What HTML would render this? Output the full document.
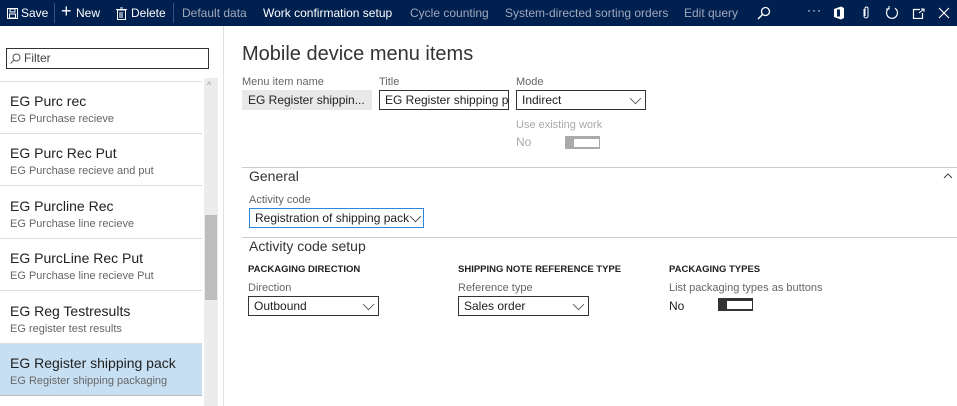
<!DOCTYPE html>
<html><head><style>
*{margin:0;padding:0;box-sizing:border-box}
body{width:957px;height:406px;overflow:hidden;background:#fff;font-family:"Segoe UI","Liberation Sans",sans-serif;color:#212121;position:relative}
.a{position:absolute;white-space:nowrap}
.bar{position:absolute;left:0;top:0;width:957px;height:26px;background:#002050;color:#fff;font-size:12px}
.bar .a{top:6px}
.dim{color:#a0a8bc}
.lbl{font-size:11px;color:#666}
.fld{position:absolute;height:20px;border:1px solid #333;font-size:12px;padding:2px 5px;white-space:nowrap;overflow:hidden}
.chev{position:absolute;right:5px;top:3px;width:9px;height:9px;border-right:1px solid #555;border-bottom:1px solid #555;transform:rotate(45deg) scale(.9)}
.it{position:absolute;left:0;width:202px;height:52px;border-bottom:1px solid #ddd}
.it .t{position:absolute;left:10px;top:11px;font-size:14px}
.it .s{position:absolute;left:10px;top:31px;font-size:11px;color:#666}
.hd{font-size:9.5px;font-weight:bold}
.tog{position:absolute;width:35px;height:13px;background:#333}
.tog::after{content:"";position:absolute;left:9px;top:3px;width:23px;height:6px;background:#fff;border:1px solid #fff}
</style></head><body>
<div class="bar">
<svg class="a" style="left:7px;top:8px" width="11" height="11" viewBox="0 0 11 11"><rect x=".5" y=".5" width="10" height="10" fill="none" stroke="#fff"/><rect x="3" y="1" width="5" height="3" fill="none" stroke="#fff"/><rect x="2.5" y="6" width="6" height="4" fill="none" stroke="#fff"/></svg>
<span class="a" style="left:21px">Save</span>
<div class="a" style="left:54px;top:3px;width:1px;height:20px;background:#3a5080"></div>
<span class="a" style="left:61px;top:1px;font-size:18px;font-weight:200">+</span>
<span class="a" style="left:76px">New</span>
<svg class="a" style="left:116px;top:7px" width="11" height="13" viewBox="0 0 11 13"><rect x="1.5" y="3" width="8" height="9.5" fill="none" stroke="#fff"/><path d="M0 2.5h11M4 1h3M4 5v6M6 5v6" stroke="#fff"/></svg>
<span class="a" style="left:131px">Delete</span>
<div class="a" style="left:173px;top:3px;width:1px;height:20px;background:#3a5080"></div>
<span class="a dim" style="left:182px">Default data</span>
<span class="a" style="left:263px">Work confirmation setup</span>
<span class="a dim" style="left:410px">Cycle counting</span>
<span class="a dim" style="left:505px">System-directed sorting orders</span>
<span class="a dim" style="left:684px">Edit query</span>
<svg class="a" style="left:757px;top:6px" width="14" height="14" viewBox="0 0 14 14"><circle cx="8.5" cy="5.5" r="4" fill="none" stroke="#fff" stroke-width="1.3"/><path d="M5.5 8.5L1 13" stroke="#fff" stroke-width="1.4"/></svg>
<span class="a" style="left:807px;top:3px;letter-spacing:1px">···</span>
<svg class="a" style="left:833px;top:6px" width="12" height="14" viewBox="0 0 12 14"><path d="M1 3L8 0.5 11 2v10l-3 1.5L1 11V3z" fill="#fff"/><rect x="4" y="3.5" width="3" height="7" fill="#002050"/></svg>
<svg class="a" style="left:863px;top:6px" width="6" height="14" viewBox="0 0 6 14"><path d="M1 3v7a2 2 0 004 0V2.5a1.5 1.5 0 00-3 0V10" fill="none" stroke="#fff"/></svg>
<svg class="a" style="left:885px;top:6px" width="14" height="14" viewBox="0 0 14 14"><path d="M4 2.2A5.5 5.5 0 1010 2.2" fill="none" stroke="#fff" stroke-width="1.2"/><path d="M4 0v3H1" fill="none" stroke="#fff"/></svg>
<svg class="a" style="left:912px;top:8px" width="13" height="11" viewBox="0 0 13 11"><path d="M8 1.5H1.5v9h9V5" fill="none" stroke="#fff" stroke-width="1.2"/><path d="M7 5l5-4M9 1h3v3" fill="none" stroke="#fff"/></svg>
<svg class="a" style="left:938px;top:7px" width="12" height="12" viewBox="0 0 12 12"><path d="M1 1l10 10M11 1L1 11" stroke="#fff" stroke-width="1.2"/></svg>
</div>
<div class="a" style="left:223px;top:26px;width:1px;height:380px;background:#e0e0e0"></div>
<div class="a" style="left:6px;top:48px;width:203px;height:21px;border:1px solid #333"></div>
<svg class="a" style="left:10px;top:53px" width="11" height="11" viewBox="0 0 11 11"><circle cx="6.5" cy="4.5" r="3.5" fill="none" stroke="#555"/><path d="M4 7L.5 10.5" stroke="#555"/></svg>
<span class="a" style="left:24px;top:51px;font-size:12px;color:#444">Filter</span>
<div class="a" style="left:0;top:81px;width:202px;height:1px;background:#ddd"></div>
<div class="a" style="left:204px;top:78px;width:14px;height:328px;background:#ececec"></div>
<div class="a" style="left:205px;top:215px;width:12px;height:85px;background:#bdbdbd"></div>
<span class="a" style="left:207px;top:80px;font-size:9px;color:#999">^</span>
<div class="it" style="top:82px"><span class="t">EG Purc rec</span><span class="s">EG Purchase recieve</span></div>
<div class="it" style="top:134px"><span class="t">EG Purc Rec Put</span><span class="s">EG Purchase recieve and put</span></div>
<div class="it" style="top:187px"><span class="t">EG Purcline Rec</span><span class="s">EG Purchase line recieve</span></div>
<div class="it" style="top:239px"><span class="t">EG PurcLine Rec Put</span><span class="s">EG Purchase line recieve Put</span></div>
<div class="it" style="top:292px"><span class="t">EG Reg Testresults</span><span class="s">EG register test results</span></div>
<div class="it" style="top:344px;background:#c7dff3;border-bottom-color:#bbb"><span class="t">EG Register shipping pack</span><span class="s">EG Register shipping packaging</span></div>

<span class="a" style="left:242px;top:43px;font-size:20px;font-weight:300;color:#333">Mobile device menu items</span>
<span class="a lbl" style="left:242px;top:76px">Menu item name</span>
<span class="a lbl" style="left:379px;top:76px">Title</span>
<span class="a lbl" style="left:516px;top:76px">Mode</span>
<div class="fld" style="left:242px;top:90px;width:130px;border-color:#e8e8e8;background:#e8e8e8">EG Register shippin...</div>
<div class="fld" style="left:379px;top:90px;width:130px">EG Register shipping p</div>
<div class="fld" style="left:516px;top:90px;width:130px">Indirect<span class="chev"></span></div>
<span class="a lbl" style="left:516px;top:119px;color:#aaa">Use existing work</span>
<span class="a" style="left:516px;top:135px;font-size:12px;color:#aaa">No</span>
<div class="tog" style="left:565px;top:136px;background:#aaa"></div>
<div class="a" style="left:242px;top:167px;width:715px;height:1px;background:#ccc"></div>
<span class="a" style="left:249px;top:168px;font-size:14px;color:#333">General</span>
<svg class="a" style="left:943px;top:172px" width="10" height="7" viewBox="0 0 10 7"><path d="M1 6l4-4 4 4" fill="none" stroke="#444"/></svg>
<span class="a lbl" style="left:249px;top:194px">Activity code</span>
<div class="fld" style="left:249px;top:208px;width:175px;border-color:#2b88d8;padding-right:16px">Registration of shipping pack<span class="chev" style="right:3px;border-color:#444"></span></div>
<div class="a" style="left:242px;top:237px;width:715px;height:1px;background:#ccc"></div>
<span class="a" style="left:249px;top:238px;font-size:14px;color:#333">Activity code setup</span>
<span class="a hd" style="left:248px;top:264px">PACKAGING DIRECTION</span>
<span class="a hd" style="left:458px;top:264px">SHIPPING NOTE REFERENCE TYPE</span>
<span class="a hd" style="left:669px;top:264px">PACKAGING TYPES</span>
<span class="a lbl" style="left:248px;top:282px">Direction</span>
<span class="a lbl" style="left:458px;top:282px">Reference type</span>
<span class="a lbl" style="left:669px;top:282px">List packaging types as buttons</span>
<div class="fld" style="left:248px;top:296px;width:131px">Outbound<span class="chev"></span></div>
<div class="fld" style="left:458px;top:296px;width:131px">Sales order<span class="chev"></span></div>
<span class="a" style="left:669px;top:299px;font-size:12px">No</span>
<div class="tog" style="left:718px;top:298px"></div>
</body></html>
